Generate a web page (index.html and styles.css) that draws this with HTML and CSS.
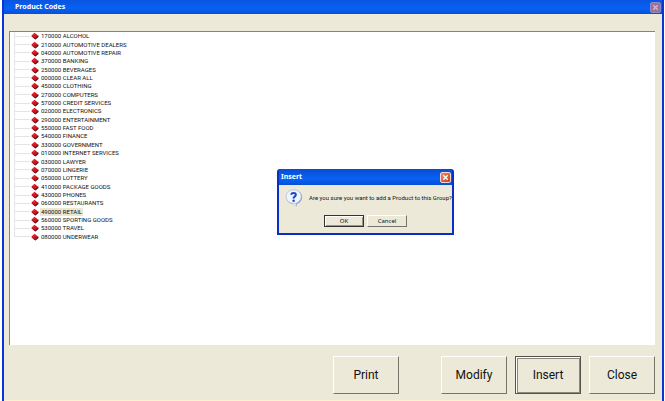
FILE: index.html
```html
<!DOCTYPE html>
<html lang="en">
<head>
<meta charset="utf-8">
<title>Product Codes</title>
<link rel="stylesheet" href="styles.css">
</head>
<body>
<svg class="defs" aria-hidden="true">
  <symbol id="book" viewBox="0 0 8 8">
    <path d="M1 4.500 4.500 7.500 7.500 5 7.500 3.500z" fill="#3b1a1a"/>
    <path d="M.5 3.500 3.500.8 7 3.600 4.200 6.400z" fill="#d8121f"/>
    <path d="M.5 3.500 4.200 6.400v1L.7 4.600z" fill="#9c0712"/>
    <path d="M2.500 3 3.600 2" stroke="#ff7a70" stroke-width=".8"/>
  </symbol>
  <symbol id="cross" viewBox="0 0 10 10">
    <path d="M2.500 2.500 7.500 7.500M7.500 2.500 2.500 7.500" stroke="currentColor" stroke-width="1.400"/>
  </symbol>
</svg>
<main class="window">
  <header class="titlebar">
    <h1>Product Codes</h1>
    <button class="close faded" aria-label="Close window"><svg><use href="#cross"/></svg></button>
  </header>
  <section class="tree-box">
    <ul class="tree">
      <li><svg><use href="#book"/></svg><span>170000 ALCOHOL</span></li>
      <li><svg><use href="#book"/></svg><span>210000 AUTOMOTIVE DEALERS</span></li>
      <li><svg><use href="#book"/></svg><span>040000 AUTOMOTIVE REPAIR</span></li>
      <li><svg><use href="#book"/></svg><span>370000 BANKING</span></li>
      <li><svg><use href="#book"/></svg><span>250000 BEVERAGES</span></li>
      <li><svg><use href="#book"/></svg><span>000000 CLEAR ALL</span></li>
      <li><svg><use href="#book"/></svg><span>450000 CLOTHING</span></li>
      <li><svg><use href="#book"/></svg><span>270000 COMPUTERS</span></li>
      <li><svg><use href="#book"/></svg><span>570000 CREDIT SERVICES</span></li>
      <li><svg><use href="#book"/></svg><span>020000 ELECTRONICS</span></li>
      <li><svg><use href="#book"/></svg><span>290000 ENTERTAINMENT</span></li>
      <li><svg><use href="#book"/></svg><span>550000 FAST FOOD</span></li>
      <li><svg><use href="#book"/></svg><span>540000 FINANCE</span></li>
      <li><svg><use href="#book"/></svg><span>330000 GOVERNMENT</span></li>
      <li><svg><use href="#book"/></svg><span>010000 INTERNET SERVICES</span></li>
      <li><svg><use href="#book"/></svg><span>030000 LAWYER</span></li>
      <li><svg><use href="#book"/></svg><span>070000 LINGERIE</span></li>
      <li><svg><use href="#book"/></svg><span>050000 LOTTERY</span></li>
      <li><svg><use href="#book"/></svg><span>410000 PACKAGE GOODS</span></li>
      <li><svg><use href="#book"/></svg><span>430000 PHONES</span></li>
      <li><svg><use href="#book"/></svg><span>060000 RESTAURANTS</span></li>
      <li class="selected"><svg><use href="#book"/></svg><span>490000 RETAIL</span></li>
      <li><svg><use href="#book"/></svg><span>560000 SPORTING GOODS</span></li>
      <li><svg><use href="#book"/></svg><span>530000 TRAVEL</span></li>
      <li><svg><use href="#book"/></svg><span>080000 UNDERWEAR</span></li>
    </ul>
  </section>
  <footer class="actions">
    <button class="action print">Print</button>
    <button class="action">Modify</button>
    <button class="action default">Insert</button>
    <button class="action">Close</button>
  </footer>
</main>
<div class="dialog" role="dialog" aria-labelledby="dialog-title">
  <header class="dialog-title">
    <h2 id="dialog-title">Insert</h2>
    <button class="close" aria-label="Close dialog"><svg><use href="#cross"/></svg></button>
  </header>
  <div class="dialog-body">
    <div class="message">
      <svg class="question" viewBox="0 0 18 18" aria-hidden="true">
        <path d="M9 2.200a7 6.300 0 0 1 2.800 12L11.500 17.500 7.800 14.800A7 6.300 0 0 1 9 2.200z" fill="#8f9cb4"/>
        <ellipse cx="9.400" cy="8.200" rx="7.700" ry="7" fill="#8f9cb4"/>
        <path d="M6.500 13.500 10.600 16.900 11.500 13z" fill="#dbe8fb"/>
        <ellipse cx="8.600" cy="7.600" rx="7.600" ry="6.800" fill="#edf5ff" stroke="#a9bddd" stroke-width=".7"/>
        <path d="M6.300 5.800C6.400 3.200 11 3.300 10.800 5.800 10.700 7.400 8.600 7.500 8.600 9.400" fill="none" stroke="#1746bd" stroke-width="2"/>
        <circle cx="8.600" cy="11.700" r="1.200" fill="#1746bd"/>
      </svg>
      <p>Are you sure you want to add a Product to this Group?</p>
    </div>
    <div class="dialog-actions">
      <button class="small focused">OK</button>
      <button class="small">Cancel</button>
    </div>
  </div>
</div>
</body>
</html>
```
FILE: styles.css
```css
* { box-sizing: border-box; }

body {
  margin: 0;
  min-height: 100vh;
  display: flex;
  background: #fff;
  font-family: Roboto, "Liberation Sans", sans-serif;
  color: #111;
}

h1, h2, p, ul { margin: 0; padding: 0; }

.defs { position: absolute; width: 0; height: 0; }

.window {
  flex: 1;
  display: flex;
  flex-direction: column;
  margin: 0 1px 0 2px;
  border: solid #0a35d8;
  border-width: 0 2px;
  background: #ece9d8;
}

.titlebar {
  display: flex;
  align-items: center;
  justify-content: space-between;
  height: 14px;
  padding: 0 1px 0 11px;
  background: linear-gradient(#0a55e0, #0860f4 60%, #0450d8);
}

h1, h2 {
  font: bold 7px/10px "Noto Sans", sans-serif;
  color: #fff;
}

.close {
  display: flex;
  width: 11px;
  height: 11px;
  padding: 0;
  border: 1px solid #f4d5cc;
  border-radius: 2px;
  background: linear-gradient(135deg, #f08a68, #d03c18);
  color: #fff;
}

.close svg { width: 100%; height: 100%; }

.faded {
  border-color: #8d8cc4;
  background: #a06f96;
  color: #d3bdd6;
}

.tree-box {
  flex: 1;
  margin: 17px 7px 0 5px;
  border: solid #85857a;
  border-width: 1px 0 0 1px;
  background: #fff;
}

.tree {
  display: grid;
  grid-auto-rows: 1fr;
  height: 209px;
  margin-left: 4px;
  background: linear-gradient(#e4e4e4, #e4e4e4) left top / 1px 205px no-repeat;
  list-style: none;
  font-size: 6px;
  line-height: 8px;
}

.tree li {
  display: flex;
  align-items: center;
  gap: 1px;
  min-height: 0;
}

.tree li::before {
  content: "";
  width: 16px;
  border-top: 1px solid #e4e4e4;
}

.tree svg { width: 8px; height: 8px; }

.tree span { padding: 0 1px; white-space: nowrap; }

.selected span { background: #ece6d2; }

.actions {
  display: flex;
  justify-content: flex-end;
  gap: 8px;
  padding: 11px 7px 6px;
  border-bottom: 1px solid #fbf0cf;
}

.action {
  width: 66px;
  height: 38px;
  padding: 0;
  border: 1px solid;
  border-color: #fff #77756b #77756b #fff;
  background: #ece9d8;
  font: 12px/16px Roboto, "Liberation Sans", sans-serif;
  color: #111;
}

.print { margin-right: 34px; }

.default {
  border-color: #55534b;
  box-shadow: inset 1px 1px #fff, inset -1px -1px #8b897e, inset 2px 2px #8b897e;
}

.dialog {
  position: absolute;
  top: 169px;
  left: 277px;
  width: 177px;
  border: solid #0b2fc4;
  border-width: 0 2px 2px;
  border-radius: 3px 3px 0 0;
  background: #ece9d8;
}

.dialog-title {
  display: flex;
  align-items: center;
  justify-content: space-between;
  height: 16px;
  padding: 0 1px 0 2px;
  background: linear-gradient(#0a4ccf, #0862f6 60%, #0450d8);
}

.dialog-body { padding: 4px 4px 6px; }

.message {
  display: flex;
  align-items: center;
  gap: 6px;
  padding-left: 2px;
  font: 6px/8px Roboto, "Liberation Sans", sans-serif;
}

.message p { white-space: nowrap; }

.question { width: 18px; height: 18px; flex: none; }

.dialog-actions {
  display: flex;
  justify-content: center;
  gap: 3px;
  margin-top: 8px;
}

.small {
  width: 40px;
  height: 12px;
  padding: 0;
  border: 1px solid;
  border-color: #fff #77756b #77756b #fff;
  background: #ece9d8;
  font: 6px/8px "Noto Sans", sans-serif;
  color: #111;
}

.focused {
  border-color: #333;
  box-shadow: inset 1px 1px #fff, inset -1px -1px #99978b;
}
```
